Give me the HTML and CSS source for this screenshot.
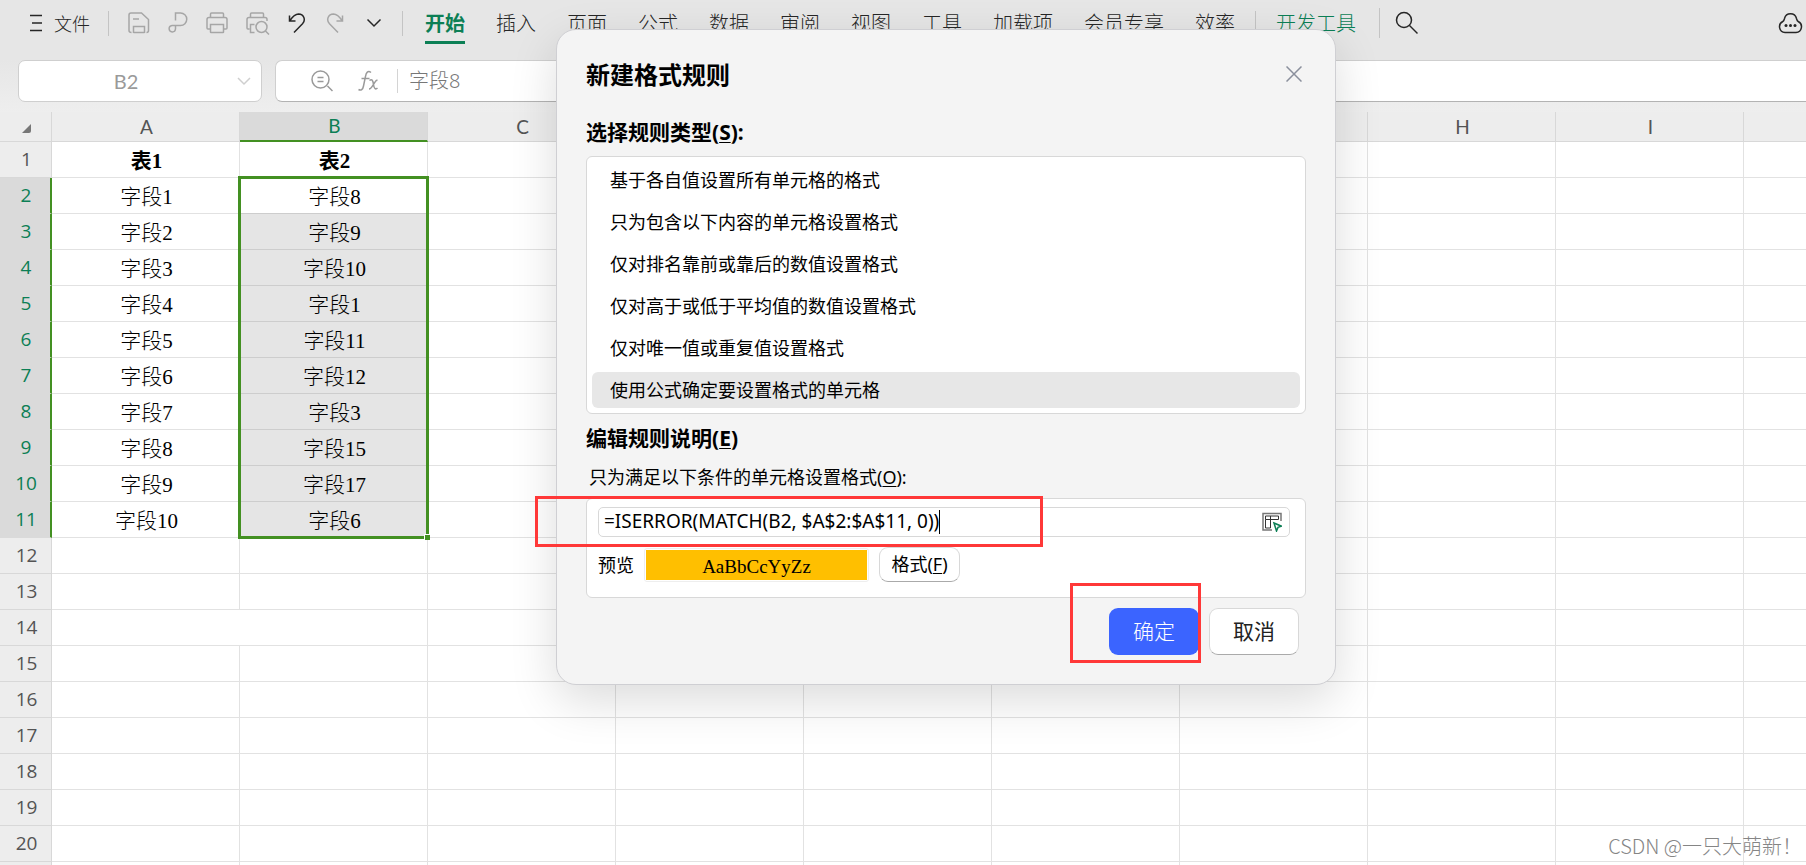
FILE: index.html
```html
<!DOCTYPE html>
<html lang="zh-CN">
<head>
<meta charset="utf-8">
<title>新建格式规则</title>
<link rel="stylesheet" href="styles.css">
</head>
<body>
<div class="app">
  <header class="toolbar">
    <button class="file"><svg width="12" height="18" viewBox="0 0 12 18"><path d="M0 1.5h12M2 9h10M0 16.5h12"/></svg>文件</button>
    <span class="sep"></span>
    <div class="quick">
      <button class="dim" aria-label="保存"><svg width="22" height="22" viewBox="0 0 22 22"><path d="M3.500 20.500q-2.500 0-2.500-2V3q0-2 2-2h10.500L20.500 7.500V18.500q0 2-2 2M5.500 21v-6.500h11V21M5.500 20.500h11M5 7h6"/></svg></button>
      <button class="dim" aria-label="输出为PDF"><svg width="20" height="22" viewBox="0 0 20 22"><path d="M7.500 8.500V1h5a5.800 5.800 0 0 1 0 12.500H4a3.200 3.200 0 1 0 3.500 3.500V13.500"/></svg></button>
      <button class="dim" aria-label="打印"><svg width="22" height="22" viewBox="0 0 22 22"><path d="M4.500 5.500V2q0-1 1-1h11q1 0 1 1v3.500M4.500 17H2q-1 0-1-1V7.500q0-2 2-2h16q2 0 2 2V16q0 1-1 1h-2.500M4.500 12.500h13v7.500q0 .5-.5.500H5q-.5 0-.5-.5z"/></svg></button>
      <button class="dim" aria-label="打印预览"><svg width="24" height="24" viewBox="0 0 24 24"><path d="M4.500 6.500V3q0-1 1-1h11q1 0 1 1v3.500M3.500 18H2q-1 0-1-1V8.500q0-2 2-2h16q2 0 2 2V10M8.500 13.500h-4v8h4M19.500 20l3.500 3.500"/><circle cx="15.500" cy="16" r="5.500"/></svg></button>
      <button aria-label="撤销"><svg width="18" height="22" viewBox="0 0 18 22"><path d="M1.500 3.500v5.500h6M2 8.500C5 4 7.500 2 10.500 2c5.500.2 7.500 6 4 9.800L6 20.500"/></svg></button>
      <button class="dim redo" aria-label="恢复"><svg width="18" height="22" viewBox="0 0 18 22"><path d="M16.500 3.500v5.500h-6M16 8.500C13 4 10.500 2 7.500 2 2 2.200 0 8 3.500 11.800L12 20.500"/></svg></button>
      <button aria-label="更多"><svg width="16" height="10" viewBox="0 0 16 10"><path d="M1.500 1.500L8 8l6.500-6.500"/></svg></button>
    </div>
    <span class="sep"></span>
    <nav class="tabs">
      <button class="tab active">开始</button>
      <button class="tab">插入</button>
      <button class="tab">页面</button>
      <button class="tab">公式</button>
      <button class="tab">数据</button>
      <button class="tab">审阅</button>
      <button class="tab">视图</button>
      <button class="tab">工具</button>
      <button class="tab">加载项</button>
      <button class="tab">会员专享</button>
      <button class="tab">效率</button>
    </nav>
    <span class="sep"></span>
    <button class="tab dev">开发工具</button>
    <span class="sep tall"></span>
    <button aria-label="搜索"><svg width="24" height="24" viewBox="0 0 24 24"><circle cx="9" cy="9" r="7.500"/><path d="M14.500 14.500l8 8"/></svg></button>
    <button class="cloud" aria-label="云"><svg width="25" height="22" viewBox="0 0 25 22"><path d="M7 20.500a5.800 5.800 0 0 1-2.200-11C6 9 6.200 7.500 6.500 6.500a6.200 6.200 0 0 1 12 0c.3 1 .5 2.500 1.700 3a5.800 5.800 0 0 1-2.200 11z"/><g class="dots"><circle cx="8" cy="13.500" r="1.500"/><circle cx="12.500" cy="13.500" r="1.500"/><circle cx="17" cy="13.500" r="1.500"/></g></svg></button>
  </header>

  <div class="formula-row">
    <div class="namebox"><input aria-label="名称框" value="B2"><svg width="14" height="9" viewBox="0 0 14 9"><path d="M1 1l6 6 6-6"/></svg></div>
    <div class="fbox">
      <svg width="22" height="22" viewBox="0 0 22 22"><circle cx="9.500" cy="9.500" r="8.500"/><path d="M6.500 7.500h6M6.500 11.500h6M16.500 16l5 5"/></svg>
      <svg width="22" height="22" viewBox="0 0 22 22"><path d="M14 2.500c-3-2.500-5 0-5.500 4l-2 9.500c-.6 3.500-2.500 5-5 3.500M4.500 8.500h8M12.500 10.500c2.500-2 3.500 0 4 4s2 5.500 4 3.500M20.500 10.500c-2.500-1.500-5 8.500-8.500 8.500"/></svg>
      <span class="fsep"></span>
      <input aria-label="编辑栏" value="字段8">
    </div>
  </div>

  <main class="sheet">
    <table class="grid">
      <colgroup><col class="c0"><col span="10" class="cn"></colgroup>
      <thead><tr><th><svg class="corner" width="9" height="9" viewBox="0 0 9 9"><path d="M9 0v7q0 2-2 2H0z"/></svg></th><th>A</th><th class="on">B</th><th>C</th><th></th><th></th><th></th><th></th><th>H</th><th>I</th><th></th></tr></thead>
      <tbody>
        <tr class="bold"><th>1</th><td>表1</td><td>表2</td><td></td><td></td><td></td><td></td><td></td><td></td><td></td><td></td></tr>
        <tr class="sel first"><th>2</th><td>字段1</td><td>字段8</td><td></td><td></td><td></td><td></td><td></td><td></td><td></td><td></td></tr>
        <tr class="sel"><th>3</th><td>字段2</td><td>字段9</td><td></td><td></td><td></td><td></td><td></td><td></td><td></td><td></td></tr>
        <tr class="sel"><th>4</th><td>字段3</td><td>字段10</td><td></td><td></td><td></td><td></td><td></td><td></td><td></td><td></td></tr>
        <tr class="sel"><th>5</th><td>字段4</td><td>字段1</td><td></td><td></td><td></td><td></td><td></td><td></td><td></td><td></td></tr>
        <tr class="sel"><th>6</th><td>字段5</td><td>字段11</td><td></td><td></td><td></td><td></td><td></td><td></td><td></td><td></td></tr>
        <tr class="sel"><th>7</th><td>字段6</td><td>字段12</td><td></td><td></td><td></td><td></td><td></td><td></td><td></td><td></td></tr>
        <tr class="sel"><th>8</th><td>字段7</td><td>字段3</td><td></td><td></td><td></td><td></td><td></td><td></td><td></td><td></td></tr>
        <tr class="sel"><th>9</th><td>字段8</td><td>字段15</td><td></td><td></td><td></td><td></td><td></td><td></td><td></td><td></td></tr>
        <tr class="sel"><th>10</th><td>字段9</td><td>字段17</td><td></td><td></td><td></td><td></td><td></td><td></td><td></td><td></td></tr>
        <tr class="sel"><th>11</th><td>字段10</td><td>字段6</td><td></td><td></td><td></td><td></td><td></td><td></td><td></td><td></td></tr>
        <tr><th>12</th><td></td><td></td><td></td><td></td><td></td><td></td><td></td><td></td><td></td><td></td></tr>
        <tr><th>13</th><td></td><td></td><td></td><td></td><td></td><td></td><td></td><td></td><td></td><td></td></tr>
        <tr><th>14</th><td colspan="2"></td><td></td><td></td><td></td><td></td><td></td><td></td><td></td><td></td></tr>
        <tr><th>15</th><td></td><td></td><td></td><td></td><td></td><td></td><td></td><td></td><td></td><td></td></tr>
        <tr><th>16</th><td></td><td></td><td></td><td></td><td></td><td></td><td></td><td></td><td></td><td></td></tr>
        <tr><th>17</th><td></td><td></td><td></td><td></td><td></td><td></td><td></td><td></td><td></td><td></td></tr>
        <tr><th>18</th><td></td><td></td><td></td><td></td><td></td><td></td><td></td><td></td><td></td><td></td></tr>
        <tr><th>19</th><td></td><td></td><td></td><td></td><td></td><td></td><td></td><td></td><td></td><td></td></tr>
        <tr><th>20</th><td></td><td></td><td></td><td></td><td></td><td></td><td></td><td></td><td></td><td></td></tr>
        <tr><th></th><td></td><td></td><td></td><td></td><td></td><td></td><td></td><td></td><td></td><td></td></tr>
      </tbody>
    </table>
    <div class="range"><span class="handle"></span></div>
  </main>

  <section class="dialog" role="dialog" aria-labelledby="dlg-title">
    <div class="dlg-head">
      <h1 id="dlg-title">新建格式规则</h1>
      <button class="close" aria-label="关闭"><svg width="16" height="16" viewBox="0 0 16 16"><path d="M0.500 0.500l15 15M15.500 0.500l-15 15"/></svg></button>
    </div>
    <h2 id="types">选择规则类型(<u>S</u>):</h2>
    <ul class="rules" role="listbox" aria-labelledby="types">
      <li role="option">基于各自值设置所有单元格的格式</li>
      <li role="option">只为包含以下内容的单元格设置格式</li>
      <li role="option">仅对排名靠前或靠后的数值设置格式</li>
      <li role="option">仅对高于或低于平均值的数值设置格式</li>
      <li role="option">仅对唯一值或重复值设置格式</li>
      <li role="option" class="picked" aria-selected="true">使用公式确定要设置格式的单元格</li>
    </ul>
    <h2>编辑规则说明(<u>E</u>)</h2>
    <label class="cond" for="formula">只为满足以下条件的单元格设置格式(<u>O</u>):</label>
    <div class="panel">
      <div class="field">
        <input id="formula" value="=ISERROR(MATCH(B2, $A$2:$A$11, 0))"><span class="caret"></span>
        <button class="pick" aria-label="选择区域"><svg width="20" height="20" viewBox="0 0 20 20"><path class="frame" d="M10 18H1V1.500h18V9"/><path class="thin" d="M3.500 4h13v3.500h-13zM3.500 7.500v8.500h5V4"/><path class="arrow" d="M12 11l7.500 3.200-3.500 1.200-1.500 3.600z"/></svg></button>
      </div>
      <div class="preview-row">
        <span>预览</span>
        <div class="preview"><span>AaBbCcYyZz</span></div>
        <button class="format">格式(<u>F</u>)</button>
      </div>
    </div>
    <div class="actions">
      <button class="ok">确定</button>
      <button class="cancel">取消</button>
    </div>
  </section>

  <div class="mark mark-formula"></div>
  <div class="mark mark-ok"></div>
  <div class="watermark">CSDN @一只大萌新！</div>
</div>
</body>
</html>
```
FILE: styles.css
```css
* { box-sizing: border-box; }
body {
  margin: 0;
  overflow: hidden;
  font-family: "Noto Sans", "Noto Sans CJK SC", sans-serif;
  font-size: 18px;
  color: #000;
}
button, input {
  font: inherit;
  color: inherit;
  border: 0;
  padding: 0;
  background: none;
  outline: none;
}
svg { display: block; fill: none; stroke: currentColor; stroke-width: 1.5; flex: none; }
u { text-underline-offset: 2px; text-decoration-thickness: 1px; }

.app {
  position: relative;
  display: flex;
  flex-direction: column;
  height: 100vh;
  overflow: hidden;
  background: linear-gradient(#e6e6e6 60px, #eee 112px);
}

.toolbar {
  display: flex;
  align-items: center;
  height: 46px;
  padding: 0 3px 0 30px;
  color: #262626;
  font-weight: 300;
}
.file { display: flex; align-items: center; gap: 12px; margin-right: 18px; }
.sep { width: 1px; height: 25px; background: #c4c4c4; }
.sep.tall { height: 30px; margin: 0 15px 0 23px; }
.quick { display: flex; align-items: center; gap: 18px; margin: 0 20px 0 19px; }
.redo { margin: 0 4px 0 2px; }
.dim { color: #a6a6a6; }
.tabs { display: flex; gap: 31px; margin: 0 20px 0 22px; }
.tab { height: 42px; padding-top: 2px; font-size: 20px; line-height: 40px; white-space: nowrap; }
.tab.active { color: #0c7f55; font-weight: 700; border-bottom: 3px solid #0c7f55; }
.tab.dev { color: #0c7f55; margin-left: 20px; }
.cloud { margin-left: auto; }
.dots { fill: currentColor; stroke: none; }

.formula-row { display: flex; gap: 13px; padding: 14px 0 10px 18px; height: 66px; }
.namebox, .fbox {
  display: flex;
  align-items: center;
  background: #fff;
  border: 1px solid #cfcfcf;
  border-radius: 7px;
  color: #9a9a9a;
}
.namebox { width: 244px; padding-right: 10px; }
.namebox input { flex: 1; min-width: 0; padding-right: 4px; text-align: center; font-family: Lato, sans-serif; font-size: 20px; }
.namebox svg { color: #cfcfcf; }
.fbox { flex: 1; border-right: 0; border-bottom-color: #b3b3b3; border-radius: 7px 0 0 7px; padding-left: 35px; gap: 24px; }
.fbox input { flex: 1; height: 40px; padding-bottom: 4px; margin-left: -13px; font-size: 20px; font-weight: 300; color: #777; }
.fsep { width: 1px; height: 24px; margin-left: -6px; background: #d4d4d4; }

.sheet { position: relative; flex: 1; overflow: hidden; background: #fff; }
.grid { width: 1932px; table-layout: fixed; border-collapse: separate; border-spacing: 0; }
.c0 { width: 52px; }
.cn { width: 188px; }
.grid th {
  height: 36px;
  padding: 0 0 2px 2px;
  background: #ededed;
  color: #545454;
  border-right: 1px solid #d8d8d8;
  border-bottom: 1px solid #d8d8d8;
  font: 400 19px/24px "Open Sans", sans-serif;
}
.grid thead th { height: 30px; padding-bottom: 0; font-family: Lato, sans-serif; }
.grid thead th.on { background: #dadada; color: #0c7f55; border-bottom: 2px solid #439022; }
.grid td {
  height: 36px;
  padding: 2px 0 0 2px;
  border-right: 1px solid #e2e2e2;
  border-bottom: 1px solid #e2e2e2;
  text-align: center;
  font: 300 21px/24px "Liberation Serif", "Noto Sans CJK SC", serif;
}
.grid .bold td { font-weight: 700; }
.grid .sel th { background: #dadada; color: #0c7f55; border-right: 2px solid #439022; border-bottom-color: #dadada; }
.grid .sel td:nth-child(3) { background: #e5e5e5; border-bottom-color: #cdcdcd; }
.grid .first td:nth-child(3) { background: #fff; }
.corner { margin: 3px 0 0 20px; fill: #777; stroke: none; }
.range {
  position: absolute;
  left: 238px;
  top: 64px;
  width: 191px;
  height: 363px;
  border: 3px solid #439022;
}
.handle {
  position: absolute;
  right: -4px;
  bottom: -4px;
  width: 6px;
  height: 6px;
  background: #439022;
  border: solid #fff;
  border-width: 1px 0 0 1px;
}

.dialog {
  position: absolute;
  left: 556px;
  top: 29px;
  width: 780px;
  padding: 26px 29px 29px;
  background: #f4f4f4;
  border: 1px solid #cfcfd3;
  border-radius: 20px;
  box-shadow: 0 16px 48px rgba(0, 0, 0, .14);
}
.dlg-head { display: flex; justify-content: space-between; padding-right: 4px; }
.dialog h1 { margin: 0; font-size: 24px; line-height: 38px; }
.close { width: 16px; height: 36px; color: #8a8f9c; }
.dialog h2 { margin: 0; font-size: 21px; line-height: 30px; }
.dlg-head + h2 { margin-top: 23px; }
.rules {
  display: flex;
  flex-direction: column;
  gap: 6px;
  margin: 9px 0;
  padding: 5px;
  list-style: none;
  background: #fff;
  border: 1px solid #d8d8d8;
  border-radius: 6px;
}
.rules li { padding-left: 18px; line-height: 36px; border-radius: 6px; }
.picked { background: #e7e7e7; }
.cond { display: block; padding-left: 3px; margin: 9px 0 6px; line-height: 30px; }
.panel {
  padding: 8px 15px 15px 11px;
  background: #fff;
  border: 1px solid #d8d8d8;
  border-radius: 6px;
}
.field { display: flex; align-items: center; height: 30px; padding: 0 7px 0 5px; border: 1px solid #d8d8d8; border-radius: 5px; }
.field input { field-sizing: content; height: 28px; padding-bottom: 2px; font-size: 19px; }
.caret { width: 1px; height: 24px; background: #000; }
.pick { margin-left: auto; }
.frame { stroke: #777; }
.thin { stroke: #333; stroke-width: 1; }
.arrow { stroke: #0c7f55; fill: #fff; }
.preview-row { display: flex; align-items: center; margin-top: 10px; line-height: 30px; }
.preview { width: 225px; height: 34px; margin: 0 10px; padding: 1px; border: 1px solid #eee; border-radius: 3px; }
.preview span { display: block; height: 30px; background: #ffbf00; text-align: center; font: 400 19px/34px "Liberation Serif", serif; }
.format { width: 81px; height: 35px; padding-bottom: 2px; background: #fff; border: 1px solid #d8d8d8; border-bottom-color: #aaa; border-radius: 9px; }
.actions { display: flex; justify-content: flex-end; gap: 10px; margin: 10px 7px 0 0; font-size: 21px; font-weight: 300; }
.actions button { width: 90px; height: 47px; padding-bottom: 4px; border-radius: 9px; }
.ok { background: #3b64ff; color: #fff; }
.actions .cancel { background: #fff; border: 1px solid #d8d8d8; border-bottom-color: #aaa; color: #222; font-weight: 400; }

.mark { position: absolute; border: 3px solid #ff3838; }
.mark-formula { left: 535px; top: 496px; width: 508px; height: 51px; }
.mark-ok { left: 1070px; top: 583px; width: 131px; height: 80px; }
.watermark { position: absolute; right: 4px; bottom: 4px; color: #858585; font: 300 20px/30px "Noto Sans CJK SC", sans-serif; }
```
